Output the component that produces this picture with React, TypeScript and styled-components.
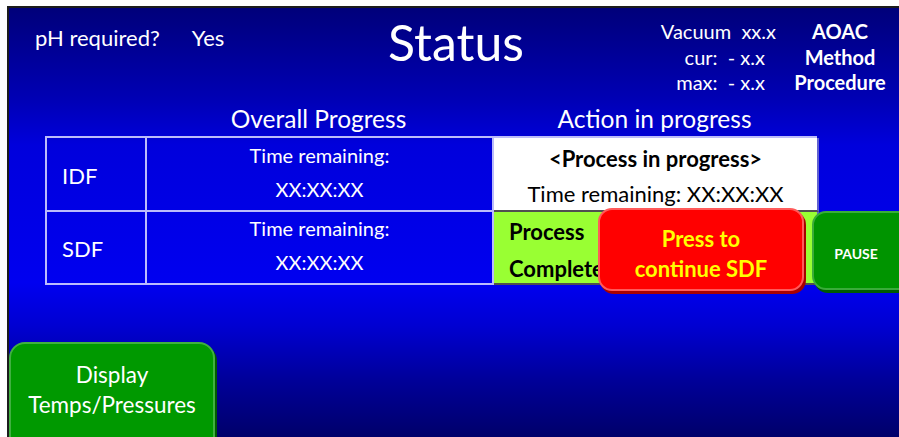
import React from 'react';
import styled, { createGlobalStyle } from 'styled-components';

const GlobalStyle = createGlobalStyle`
    html, body {
        margin: 0;
        padding: 0;
        background: #ffffff;
        overflow: hidden;
    }
    body {
        font-family: Lato, "Open Sans", "Liberation Sans", sans-serif;
    }
`

const Frame = styled.div`
    width: 899px;
    height: 437px;
    padding: 6px 0 0 7px;
    box-sizing: border-box;
`

const Screen = styled.div`
    position: relative;
    height: 100%;
    border-top: 2px solid #1c1c1c;
    border-left: 2px solid #1c1c1c;
    box-sizing: border-box;
    display: flex;
    flex-direction: column;
    overflow: hidden;
    color: #ffffff;
    background: linear-gradient(
        to bottom,
        #00007a 0%,
        #0000b4 21%,
        #0000dc 32%,
        #0000f0 64%,
        #0000d2 74%,
        #000098 87%,
        #00006a 100%
    );
    & > * {
        flex-shrink: 0;
    }
`

const Header = styled.div`
    display: grid;
    grid-template-columns: 347px 200px 220px 128px;
    height: 100px;
`

const PhBlock = styled.div`
    display: flex;
    gap: 32px;
    padding: 19px 0 0 26px;
    font-size: 22px;
    line-height: 22px;
`

const Title = styled.div`
    text-align: center;
    font-size: 50px;
    line-height: 50px;
    padding-top: 9px;
`

const VacuumBlock = styled.div`
    padding-top: 11px;
    text-align: right;
    font-size: 20px;
    line-height: 25.5px;
`

const VacuumLine = styled.div<{ $indent: number }>`
    padding-right: ${p => p.$indent}px;
    white-space: pre;
`

const MethodBlock = styled.div`
    padding-top: 11px;
    text-align: center;
    font-weight: 700;
    font-size: 20px;
    line-height: 25.5px;
`

const ProgressArea = styled.div`
    position: relative;
    margin-left: 36px;
    width: 772px;
`

const HeadRow = styled.div`
    display: grid;
    grid-template-columns: 100px 347px 325px;
    height: 28px;
    font-size: 24.5px;
    line-height: 22px;
    text-align: center;
`

const Table = styled.div`
    display: grid;
    grid-template-columns: 100px 347px 325px;
    grid-template-rows: 74px 73px;
    border-top: 2px solid rgba(220, 220, 255, 0.85);
    border-left: 2px solid rgba(220, 220, 255, 0.85);
`

const Cell = styled.div<{ $bg?: string; $dark?: boolean }>`
    display: flex;
    flex-direction: column;
    justify-content: center;
    box-sizing: border-box;
    border-right: 2px solid ${p => (p.$bg ? '#6060d0' : 'rgba(220, 220, 255, 0.85)')};
    border-bottom: 2px solid ${p => (p.$bg ? '#505050' : 'rgba(220, 220, 255, 0.85)')};
    background: ${p => p.$bg || 'transparent'};
    color: ${p => (p.$dark ? '#000000' : '#ffffff')};
`

const NameCell = styled(Cell)`
    padding: 2px 0 0 15px;
    font-size: 22px;
`

const TimeCell = styled(Cell)`
    align-items: center;
    padding-bottom: 5px;
    font-size: 20px;
    line-height: 34px;
`

const ActionCell = styled(Cell)`
    align-items: center;
    justify-content: flex-start;
    padding-top: 4px;
`

const ActionTitle = styled.div`
    font-weight: 700;
    font-size: 22px;
    line-height: 34px;
`

const ActionTime = styled.div`
    font-size: 22px;
    line-height: 35px;
`

const DoneCell = styled(Cell)`
    justify-content: flex-start;
    padding: 1px 0 0 15px;
    font-weight: 700;
    font-size: 22px;
    line-height: 37px;
`

const RoundButton = styled.div<{ $color: string; $edge: string; $shade: string }>`
    display: flex;
    flex-direction: column;
    align-items: center;
    justify-content: center;
    box-sizing: border-box;
    text-align: center;
    background: ${p => p.$color};
    border: 2px solid ${p => p.$edge};
    box-shadow: 2px 3px 0 ${p => p.$shade};
`

const ContinueButton = styled(RoundButton)`
    position: absolute;
    left: 553px;
    top: 100px;
    width: 206px;
    height: 83px;
    border-radius: 14px;
    padding-top: 9px;
    color: #ffff00;
    font-weight: 700;
    font-size: 22px;
    line-height: 30px;
`

const PauseButton = styled(RoundButton)`
    position: absolute;
    left: 767px;
    top: 103px;
    width: 100px;
    height: 79px;
    border-radius: 14px;
    padding: 5px 12px 0 0;
    font-weight: 700;
    font-size: 14px;
`

const DisplayButton = styled(RoundButton)`
    margin-top: 57px;
    width: 206px;
    height: 120px;
    justify-content: flex-start;
    border-radius: 16px;
    padding-top: 16px;
    font-size: 22.5px;
    line-height: 29.5px;
`

function App() {
    return (
        <Frame>
            <GlobalStyle />
            <Screen>
                <Header>
                    <PhBlock>
                        <span>pH required?</span>
                        <span>Yes</span>
                    </PhBlock>
                    <Title>Status</Title>
                    <VacuumBlock>
                        <VacuumLine $indent={0}>Vacuum  xx.x</VacuumLine>
                        <VacuumLine $indent={11}>cur:  - x.x</VacuumLine>
                        <VacuumLine $indent={11}>max:  - x.x</VacuumLine>
                    </VacuumBlock>
                    <MethodBlock>
                        <div>AOAC</div>
                        <div>Method</div>
                        <div>Procedure</div>
                    </MethodBlock>
                </Header>

                <ProgressArea>
                    <HeadRow>
                        <span />
                        <span>Overall Progress</span>
                        <span>Action in progress</span>
                    </HeadRow>
                    <Table>
                        <NameCell>IDF</NameCell>
                        <TimeCell>
                            <span>Time remaining:</span>
                            <span>XX:XX:XX</span>
                        </TimeCell>
                        <ActionCell $bg="#ffffff" $dark>
                            <ActionTitle>&lt;Process in progress&gt;</ActionTitle>
                            <ActionTime>Time remaining: XX:XX:XX</ActionTime>
                        </ActionCell>
                        <NameCell>SDF</NameCell>
                        <TimeCell>
                            <span>Time remaining:</span>
                            <span>XX:XX:XX</span>
                        </TimeCell>
                        <DoneCell $bg="#99ff33" $dark>
                            <span>Process</span>
                            <span>Complete</span>
                        </DoneCell>
                    </Table>

                    <ContinueButton $color="#ff0000" $edge="#ff5a5a" $shade="#a80000">
                        <span>Press to</span>
                        <span>continue SDF</span>
                    </ContinueButton>
                    <PauseButton $color="#009400" $edge="#3aac3a" $shade="#005a00">
                        PAUSE
                    </PauseButton>
                </ProgressArea>

                <DisplayButton $color="#009900" $edge="#40b040" $shade="#005c00">
                    <span>Display</span>
                    <span>Temps/Pressures</span>
                </DisplayButton>
            </Screen>
        </Frame>
    );
}

export default App;
